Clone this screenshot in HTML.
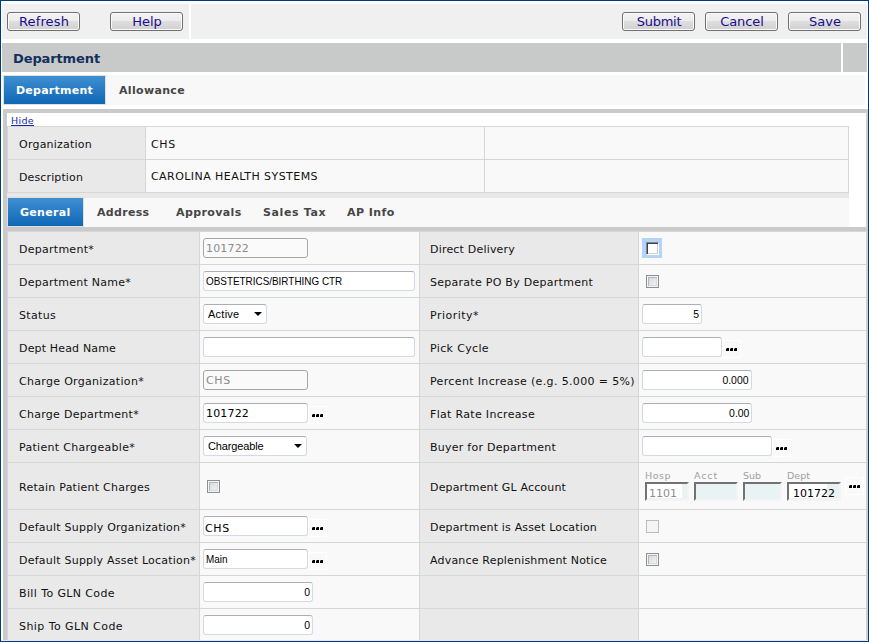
<!DOCTYPE html>
<html>
<head>
<meta charset="utf-8">
<title>Department</title>
<style>
*{box-sizing:border-box;margin:0;padding:0}
html,body{width:869px;height:642px;overflow:hidden;background:#fff}
body{position:relative;font-family:"DejaVu Sans","Liberation Sans",sans-serif;font-size:11px;color:#1a1a1a}
.abs{position:absolute}
.frame{left:0;top:0;width:869px;height:642px;border:1px solid #003a7e;z-index:50;pointer-events:none}
.tb{background:#f0f0f0;top:4px;height:35px}
.btn{position:absolute;top:12px;width:73px;height:19px;border:1px solid #707070;border-radius:3px;
 background:linear-gradient(#f3f3f3 0,#ececec 48%,#dedede 50%,#d0d0d0 100%);box-shadow:inset 0 0 0 1px #fbfbfb;
 color:#1a0d8c;font-size:13px;line-height:16px;text-align:center;font-family:"DejaVu Sans",sans-serif}
.bt{display:inline-block;white-space:nowrap;padding:1px 0 0 1px}
.title{top:43px;height:29px;background:#c8cac9}
.ttl{position:absolute;font-weight:bold;font-size:13px;color:#12305e;line-height:16px;white-space:nowrap}
.tabrow{background:#f8f8f8}
.tab{position:absolute;font-weight:bold;font-size:11px;line-height:14px;color:#464646;white-space:nowrap}
.tab.w{color:#fff}
.tabsel{position:absolute;background:linear-gradient(#3f8fd2,#0f67b6);box-shadow:0 0 0 1px #e2ddd8}
.band{background:#c9cac9}
.lab{position:absolute;background:#e9e9e9;border-left:1px solid #d6d6d6;border-top:1px solid #d6d6d6}
.val{position:absolute;background:#f9f9f9;border-left:1px solid #d6d6d6;border-top:1px solid #d6d6d6}
.t{position:absolute;white-space:nowrap;font-size:11px;line-height:14px;color:#111}
.t.hide{color:#1428aa;font-size:9.5px;line-height:12px;height:11px;border-bottom:1px solid #1428aa}
.in{position:absolute;height:20px;background:#fff;border:1px solid #d3d9e5;border-top-color:#abafb8;border-radius:3px;font-family:"Liberation Sans",sans-serif;font-size:11px;line-height:18px;padding:0 2px 0 2px;white-space:nowrap;color:#000;overflow:hidden}
.in .it{display:inline-block;transform:scaleX(.9);transform-origin:0 0}
.in.v .it,.in.dis .it{transform:none}
.in.v{font-family:"DejaVu Sans",sans-serif;font-size:11px;padding:1px 1px 0 2px}
.in.r{text-align:right;padding:0 2px 0 0}
.in.r .n{display:inline-block;transform:scaleX(.95);transform-origin:100% 0}
.in.dis{background:#fafafa;border:1px solid #a6a6a6;color:#8c8c8c;font-family:"DejaVu Sans",sans-serif;font-size:11px;padding:1px 1px 0 2px}
.it{display:inline-block;white-space:nowrap}
.sel{position:absolute;height:20px;background:#fff;border:1px solid #d3d9e5;border-top-color:#abafb8;border-radius:3px;font-family:"Liberation Sans",sans-serif;font-size:11px;line-height:18px;padding-left:4px;color:#000}
.sel i{position:absolute;right:4px;top:7px;width:0;height:0;border-left:4px solid transparent;border-right:4px solid transparent;border-top:4.5px solid #000}
.dots{position:absolute;width:19px;height:18px;background:#f9f9f9;border:1px solid #fff}
.dots i{position:absolute;top:7px;width:3px;height:3px;background:#000 linear-gradient(#777,#777) 0 0/1px 1px no-repeat}
.cb{position:absolute;width:13px;height:13px;border:1px solid #8e8f8f;background:linear-gradient(135deg,#cdd1d7 0,#e4e6e9 50%,#f6f6f6 100%);box-shadow:inset 0 0 0 1px #f4f4f4,inset 2px 2px 0 0 #b2b7bf,inset -2px -2px 0 0 #d6d9dd}
.cbd{position:absolute;width:13px;height:13px;border:1px solid #bcbcbc;background:#f4f4f4}
.gl{position:absolute;top:482px;height:19px;background:#e9f3f3;border:2px solid;border-color:#727272 #f4f4f4 #f4f4f4 #727272;font-size:11px;line-height:14px;white-space:nowrap}
.gl span{display:inline-block;background:#fff;padding-top:4px;height:14px;vertical-align:top;line-height:12px;overflow:visible}
.gll{position:absolute;top:470px;font-size:9.5px;line-height:12px;color:#a0a0a0;white-space:nowrap}
</style>
</head>
<body>
<div class="abs frame"></div>
<div class="abs" style="left:1px;top:640px;width:867px;height:1px;background:#e4e9f0;z-index:51"></div>
<!-- toolbar -->
<div class="abs tb" style="left:2px;width:187px"></div>
<div class="abs tb" style="left:191px;width:676px"></div>
<div class="btn" style="left:7px"><div class="bt" style=";letter-spacing:0.129px">Refresh</div></div>
<div class="btn" style="left:110px"><div class="bt">Help</div></div>
<div class="btn" style="left:622px"><div class="bt" style=";letter-spacing:-0.271px">Submit</div></div>
<div class="btn" style="left:705px"><div class="bt" style=";letter-spacing:-0.091px">Cancel</div></div>
<div class="btn" style="left:788px"><div class="bt" style=";letter-spacing:0.020px">Save</div></div>
<!-- title -->
<div class="abs title" style="left:2px;width:839px"></div>
<div class="abs title" style="left:843px;width:24px"></div>
<div class="ttl" style="left:13px;top:51px;letter-spacing:-0.116px">Department</div>
<!-- top tabs -->
<div class="abs tabrow" style="left:2px;top:75px;width:863px;height:30px"></div>
<div class="tabsel" style="left:4px;top:76px;width:101px;height:28px"></div>
<div class="tab w" style="left:16px;top:84px;letter-spacing:0.241px">Department</div>
<div class="tab" style="left:119px;top:84px;letter-spacing:0.332px">Allowance</div>
<!-- panel borders -->
<div class="abs band" style="left:3px;top:109px;width:865px;height:4px"></div>
<div class="abs band" style="left:3px;top:109px;width:4px;height:532px"></div>
<div class="abs band" style="left:866px;top:109px;width:2px;height:532px;background:#d2d0cc"></div>
<div class="t hide" style="left:11px;top:115px;letter-spacing:0.332px">Hide</div>
<!-- org table -->
<div class="abs" style="left:7px;top:126px;width:842px;height:67px;background:#d6d6d6"></div>
<div class="lab" style="left:7px;top:126px;width:139px;height:33px"></div>
<div class="val" style="left:145px;top:126px;width:340px;height:33px"></div>
<div class="val" style="left:484px;top:126px;width:364px;height:33px"></div>
<div class="lab" style="left:7px;top:159px;width:139px;height:33px"></div>
<div class="val" style="left:145px;top:159px;width:340px;height:33px"></div>
<div class="val" style="left:484px;top:159px;width:364px;height:33px"></div>
<div class="t" style="left:19px;top:138px;letter-spacing:0.223px">Organization</div>
<div class="t" style="left:151px;top:138px;letter-spacing:0.688px">CHS</div>
<div class="t" style="left:19px;top:171px;letter-spacing:0.122px">Description</div>
<div class="t" style="left:151px;top:170px;letter-spacing:0.443px">CAROLINA HEALTH SYSTEMS</div>
<!-- sub tabs -->
<div class="abs" style="left:7px;top:193px;width:842px;height:5px;background:#e8e8e8"></div>
<div class="abs tabrow" style="left:7px;top:198px;width:842px;height:29px"></div>
<div class="tabsel" style="left:8px;top:198px;width:75px;height:28px"></div>
<div class="tab w" style="left:20px;top:206px;letter-spacing:0.299px">General</div>
<div class="tab" style="left:97px;top:206px;letter-spacing:0.321px">Address</div>
<div class="tab" style="left:176px;top:206px;letter-spacing:0.394px">Approvals</div>
<div class="tab" style="left:263px;top:206px;letter-spacing:0.637px">Sales Tax</div>
<div class="tab" style="left:347px;top:206px;letter-spacing:0.447px">AP Info</div>
<div class="abs band" style="left:3px;top:227px;width:865px;height:4px"></div>
<!-- form grid -->
<div class="abs" style="left:7px;top:231px;width:859px;height:410px;background:#d6d6d6"></div>
<div class="lab" style="left:7px;top:231px;width:192px;height:33px"></div>
<div class="val" style="left:199px;top:231px;width:220px;height:33px"></div>
<div class="lab" style="left:419px;top:231px;width:219px;height:33px"></div>
<div class="val" style="left:638px;top:231px;width:228px;height:33px"></div>
<div class="t" style="left:19px;top:243px;letter-spacing:0.266px">Department*</div>
<div class="t" style="left:430px;top:243px;letter-spacing:0.194px">Direct Delivery</div>
<div class="lab" style="left:7px;top:264px;width:192px;height:33px"></div>
<div class="val" style="left:199px;top:264px;width:220px;height:33px"></div>
<div class="lab" style="left:419px;top:264px;width:219px;height:33px"></div>
<div class="val" style="left:638px;top:264px;width:228px;height:33px"></div>
<div class="t" style="left:19px;top:276px;letter-spacing:0.249px">Department Name*</div>
<div class="t" style="left:430px;top:276px;letter-spacing:0.271px">Separate PO By Department</div>
<div class="lab" style="left:7px;top:297px;width:192px;height:33px"></div>
<div class="val" style="left:199px;top:297px;width:220px;height:33px"></div>
<div class="lab" style="left:419px;top:297px;width:219px;height:33px"></div>
<div class="val" style="left:638px;top:297px;width:228px;height:33px"></div>
<div class="t" style="left:19px;top:309px;letter-spacing:0.323px">Status</div>
<div class="t" style="left:430px;top:309px;letter-spacing:0.483px">Priority*</div>
<div class="lab" style="left:7px;top:330px;width:192px;height:33px"></div>
<div class="val" style="left:199px;top:330px;width:220px;height:33px"></div>
<div class="lab" style="left:419px;top:330px;width:219px;height:33px"></div>
<div class="val" style="left:638px;top:330px;width:228px;height:33px"></div>
<div class="t" style="left:19px;top:342px;letter-spacing:0.161px">Dept Head Name</div>
<div class="t" style="left:430px;top:342px;letter-spacing:0.356px">Pick Cycle</div>
<div class="lab" style="left:7px;top:363px;width:192px;height:33px"></div>
<div class="val" style="left:199px;top:363px;width:220px;height:33px"></div>
<div class="lab" style="left:419px;top:363px;width:219px;height:33px"></div>
<div class="val" style="left:638px;top:363px;width:228px;height:33px"></div>
<div class="t" style="left:19px;top:375px;letter-spacing:0.310px">Charge Organization*</div>
<div class="t" style="left:430px;top:375px;letter-spacing:0.355px">Percent Increase (e.g. 5.000 = 5%)</div>
<div class="lab" style="left:7px;top:396px;width:192px;height:33px"></div>
<div class="val" style="left:199px;top:396px;width:220px;height:33px"></div>
<div class="lab" style="left:419px;top:396px;width:219px;height:33px"></div>
<div class="val" style="left:638px;top:396px;width:228px;height:33px"></div>
<div class="t" style="left:19px;top:408px;letter-spacing:0.275px">Charge Department*</div>
<div class="t" style="left:430px;top:408px;letter-spacing:0.321px">Flat Rate Increase</div>
<div class="lab" style="left:7px;top:429px;width:192px;height:33px"></div>
<div class="val" style="left:199px;top:429px;width:220px;height:33px"></div>
<div class="lab" style="left:419px;top:429px;width:219px;height:33px"></div>
<div class="val" style="left:638px;top:429px;width:228px;height:33px"></div>
<div class="t" style="left:19px;top:441px;letter-spacing:0.299px">Patient Chargeable*</div>
<div class="t" style="left:430px;top:441px;letter-spacing:0.250px">Buyer for Department</div>
<div class="lab" style="left:7px;top:462px;width:192px;height:47px"></div>
<div class="val" style="left:199px;top:462px;width:220px;height:47px"></div>
<div class="lab" style="left:419px;top:462px;width:219px;height:47px"></div>
<div class="val" style="left:638px;top:462px;width:228px;height:47px"></div>
<div class="t" style="left:19px;top:481px;letter-spacing:0.250px">Retain Patient Charges</div>
<div class="t" style="left:430px;top:481px;letter-spacing:0.161px">Department GL Account</div>
<div class="lab" style="left:7px;top:509px;width:192px;height:33px"></div>
<div class="val" style="left:199px;top:509px;width:220px;height:33px"></div>
<div class="lab" style="left:419px;top:509px;width:219px;height:33px"></div>
<div class="val" style="left:638px;top:509px;width:228px;height:33px"></div>
<div class="t" style="left:19px;top:521px;letter-spacing:0.232px">Default Supply Organization*</div>
<div class="t" style="left:430px;top:521px;letter-spacing:0.163px">Department is Asset Location</div>
<div class="lab" style="left:7px;top:542px;width:192px;height:33px"></div>
<div class="val" style="left:199px;top:542px;width:220px;height:33px"></div>
<div class="lab" style="left:419px;top:542px;width:219px;height:33px"></div>
<div class="val" style="left:638px;top:542px;width:228px;height:33px"></div>
<div class="t" style="left:19px;top:554px;letter-spacing:0.224px">Default Supply Asset Location*</div>
<div class="t" style="left:430px;top:554px;letter-spacing:0.189px">Advance Replenishment Notice</div>
<div class="lab" style="left:7px;top:575px;width:192px;height:33px"></div>
<div class="val" style="left:199px;top:575px;width:220px;height:33px"></div>
<div class="lab" style="left:419px;top:575px;width:219px;height:33px"></div>
<div class="val" style="left:638px;top:575px;width:228px;height:33px"></div>
<div class="t" style="left:19px;top:587px;letter-spacing:0.386px">Bill To GLN Code</div>
<div class="lab" style="left:7px;top:608px;width:192px;height:33px"></div>
<div class="val" style="left:199px;top:608px;width:220px;height:33px"></div>
<div class="lab" style="left:419px;top:608px;width:219px;height:33px"></div>
<div class="val" style="left:638px;top:608px;width:228px;height:33px"></div>
<div class="t" style="left:19px;top:620px;letter-spacing:0.431px">Ship To GLN Code</div>
<div class="in dis" style="left:203px;top:238px;width:105px"><div class="it" style=";letter-spacing:0.167px">101722</div></div>
<div class="in" style="left:203px;top:271px;width:212px"><div class="it">OBSTETRICS/BIRTHING CTR</div></div>
<div class="sel" style="left:203px;top:304px;width:64px"><div class="it" style=";letter-spacing:0.255px">Active</div><i></i></div>
<div class="in" style="left:203px;top:337px;width:212px"></div>
<div class="in dis" style="left:203px;top:370px;width:105px"><div class="it" style=";letter-spacing:0.688px">CHS</div></div>
<div class="in v" style="left:203px;top:403px;width:105px"><div class="it" style=";letter-spacing:0.167px">101722</div></div>
<div class="dots" style="left:308px;top:406px"><i style="left:3px"></i><i style="left:7px"></i><i style="left:11px"></i></div>
<div class="sel" style="left:203px;top:436px;width:104px"><div class="it" style=";letter-spacing:-0.138px">Chargeable</div><i></i></div>
<div class="cb" style="left:207px;top:480px"></div>
<div class="in v" style="left:203px;top:516px;width:105px;padding:3px 0 0 1px"><div class="it" style=";letter-spacing:0.688px">CHS</div></div>
<div class="dots" style="left:308px;top:519px"><i style="left:3px"></i><i style="left:7px"></i><i style="left:11px"></i></div>
<div class="in" style="left:203px;top:549px;width:105px"><div class="it">Main</div></div>
<div class="dots" style="left:308px;top:552px"><i style="left:3px"></i><i style="left:7px"></i><i style="left:11px"></i></div>
<div class="in r" style="left:203px;top:582px;width:110px"><span class="n">0</span></div>
<div class="in r" style="left:203px;top:615px;width:110px"><span class="n">0</span></div>
<div class="abs" style="left:642px;top:238px;width:20px;height:20px;background:#b4d5fb"></div>
<div class="abs" style="left:646px;top:242px;width:13px;height:13px;background:#fff;border:1px solid;border-color:#868686 #fff #fff #868686;box-shadow:inset 1px 1px 0 0 #404040,inset -1px -1px 0 0 #d4d0c8"></div>
<div class="cb" style="left:646px;top:275px"></div>
<div class="in r" style="left:642px;top:304px;width:60px"><span class="n">5</span></div>
<div class="in" style="left:642px;top:337px;width:80px"></div>
<div class="dots" style="left:722px;top:340px"><i style="left:3px"></i><i style="left:7px"></i><i style="left:11px"></i></div>
<div class="in r" style="left:642px;top:370px;width:110px"><span class="n">0.000</span></div>
<div class="in r" style="left:642px;top:403px;width:110px"><span class="n">0.00</span></div>
<div class="in" style="left:642px;top:436px;width:130px"></div>
<div class="dots" style="left:772px;top:439px"><i style="left:3px"></i><i style="left:7px"></i><i style="left:11px"></i></div>
<div class="gll" style="left:645px;letter-spacing:0.516px">Hosp</div>
<div class="gll" style="left:694px;letter-spacing:0.871px">Acct</div>
<div class="gll" style="left:743px">Sub</div>
<div class="gll" style="left:787px">Dept</div>
<div class="gl" style="left:645px;width:44px;color:#8c8c8c"><span style="padding-left:2px;width:35px">1101</span></div>
<div class="gl" style="left:694px;width:44px"></div>
<div class="gl" style="left:743px;width:39px"></div>
<div class="gl" style="left:787px;width:54px;color:#000"><span style="padding-left:4px;width:38px">101722</span></div>
<div class="dots" style="left:845px;top:477px"><i style="left:3px"></i><i style="left:7px"></i><i style="left:11px"></i></div>
<div class="cbd" style="left:646px;top:520px"></div>
<div class="cb" style="left:646px;top:553px"></div>
</body>
</html>
